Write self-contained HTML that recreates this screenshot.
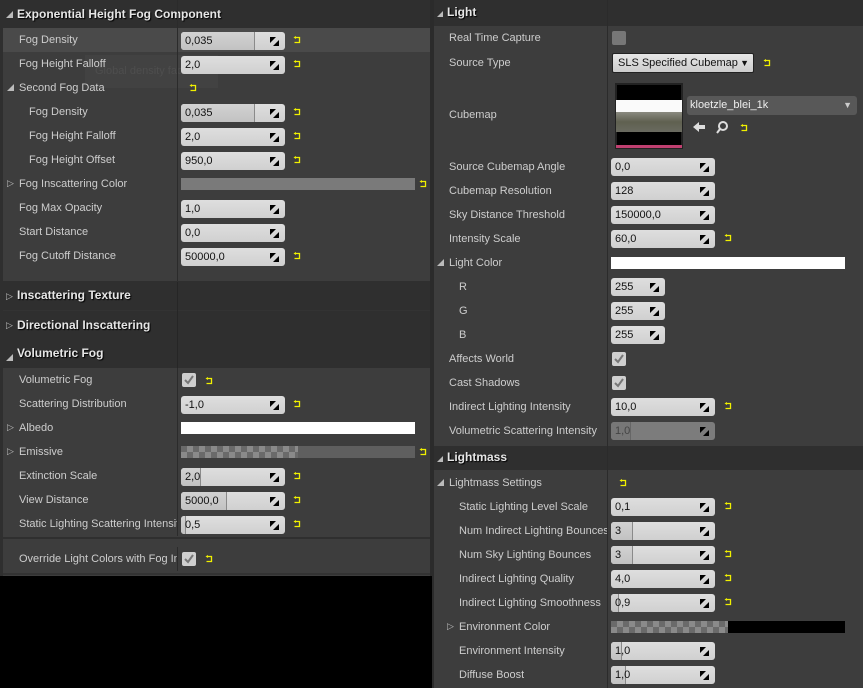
<!DOCTYPE html>
<html><head><meta charset="utf-8"><style>
*{margin:0;padding:0;box-sizing:border-box}
body{width:863px;height:688px;background:#000;position:relative;overflow:hidden;font-family:"Liberation Sans",sans-serif}
.a{position:absolute}
.pan{position:absolute;background:#3d3d3d}
.hd{position:absolute;background:#2f2f2f;color:#e6e6e6;font-weight:bold;font-size:12px;text-shadow:1px 1px 1px #000}
.l{position:absolute;font-size:11px;color:#cdcdcd;height:24px;line-height:25px;white-space:nowrap;overflow:hidden}
.tri{position:absolute;width:0;height:0;border-left:7px solid transparent;border-bottom:7px solid #bbb}
.tr{position:absolute;font-size:9px;color:#bbb}
.in{position:absolute;width:104px;height:18px;border-radius:3px;background:linear-gradient(#dedede,#d0d0d0);font-size:11px;color:#111;line-height:18px;padding-left:4px;overflow:hidden}
.in .f{position:absolute;left:0;top:0;bottom:0;background:linear-gradient(#d2d2d2,#c2c2c2);border-right:1px solid #8a8a8a}
.in span{position:relative}
.in svg{position:absolute;right:6px;top:5px}
.rs{position:absolute;width:9px;height:8px}
.cb{position:absolute;width:14px;height:14px;border-radius:2px;background:#cfcfcf}
.vd{position:absolute;width:1px;background:#2b2b2b}
</style></head><body>
<svg width="0" height="0" style="position:absolute"><defs>
<g id="dr"><polygon points="0,0 6,0 0,6" fill="#000"/><polygon points="9,9 3,9 9,3" fill="#000"/></g>
<g id="rt"><path d="M2 1.5h4.5v5h-5" fill="none" stroke="#f0f000" stroke-width="1.3"/><path d="M0.5 1.5l2.5-1.5v3z" fill="#f0f000"/></g>
<g id="ck"><path d="M3 7l3 3 5-7" fill="none" stroke="#777" stroke-width="2"/></g>
</defs></svg>

<!-- LEFT PANEL -->
<div class="pan" style="left:0;top:0;width:432px;height:576px"></div>
<div class="a" style="left:0;top:0;width:3px;height:576px;background:#2f2f2f"></div>
<div class="a" style="left:430px;top:0;width:3px;height:576px;background:#2b2b2b"></div>
<div class="hd" style="left:3px;top:0;width:427px;height:28px;line-height:28px;padding-left:14px">Exponential Height Fog Component</div>
<div class="tri" style="left:6px;top:11px"></div>
<div class="a" style="left:3px;top:28px;width:427px;height:24px;background:#4a4a4a"></div>
<div class="a" style="left:85px;top:55px;width:133px;height:33px;background:rgba(80,80,80,.3)"></div>
<div class="a" style="left:95px;top:65px;font-size:11px;color:rgba(100,100,100,.35)">Global density factor.</div>

<div class="l" style="left:19px;top:28px">Fog Density</div>
<div class="l" style="left:19px;top:52px">Fog Height Falloff</div>
<div class="tri" style="left:7px;top:84px"></div><div class="l" style="left:19px;top:76px">Second Fog Data</div>
<div class="l" style="left:29px;top:100px">Fog Density</div>
<div class="l" style="left:29px;top:124px">Fog Height Falloff</div>
<div class="l" style="left:29px;top:148px">Fog Height Offset</div>
<div class="tr" style="left:7px;top:178px">▷</div><div class="l" style="left:19px;top:172px">Fog Inscattering Color</div>
<div class="l" style="left:19px;top:196px">Fog Max Opacity</div>
<div class="l" style="left:19px;top:220px">Start Distance</div>
<div class="l" style="left:19px;top:244px">Fog Cutoff Distance</div>

<div class="in" style="left:181px;top:32px"><div class="f" style="width:74px"></div><span>0,035</span><svg width="9" height="9"><use href="#dr"/></svg></div>
<svg class="rs" style="left:293px;top:36px"><use href="#rt"/></svg>
<div class="in" style="left:181px;top:56px"><span>2,0</span><svg width="9" height="9"><use href="#dr"/></svg></div>
<svg class="rs" style="left:293px;top:60px"><use href="#rt"/></svg>
<svg class="rs" style="left:189px;top:84px"><use href="#rt"/></svg>
<div class="in" style="left:181px;top:104px"><div class="f" style="width:74px"></div><span>0,035</span><svg width="9" height="9"><use href="#dr"/></svg></div>
<svg class="rs" style="left:293px;top:108px"><use href="#rt"/></svg>
<div class="in" style="left:181px;top:128px"><span>2,0</span><svg width="9" height="9"><use href="#dr"/></svg></div>
<svg class="rs" style="left:293px;top:132px"><use href="#rt"/></svg>
<div class="in" style="left:181px;top:152px"><span>950,0</span><svg width="9" height="9"><use href="#dr"/></svg></div>
<svg class="rs" style="left:293px;top:156px"><use href="#rt"/></svg>
<div class="a" style="left:181px;top:178px;width:234px;height:12px;background:#7a7a7a"></div>
<svg class="rs" style="left:419px;top:180px"><use href="#rt"/></svg>
<div class="in" style="left:181px;top:200px"><span>1,0</span><svg width="9" height="9"><use href="#dr"/></svg></div>
<div class="in" style="left:181px;top:224px"><span>0,0</span><svg width="9" height="9"><use href="#dr"/></svg></div>
<div class="in" style="left:181px;top:248px"><span>50000,0</span><svg width="9" height="9"><use href="#dr"/></svg></div>
<svg class="rs" style="left:293px;top:252px"><use href="#rt"/></svg>

<div class="vd" style="left:177px;top:0;height:282px"></div>

<div class="hd" style="left:3px;top:281px;width:427px;height:29px;line-height:29px;padding-left:14px">Inscattering Texture</div>
<div class="tr" style="left:6px;top:291px">▷</div>
<div class="hd" style="left:3px;top:310px;width:427px;height:29px;line-height:29px;padding-left:14px;border-top:1px solid #333">Directional Inscattering</div>
<div class="tr" style="left:6px;top:320px">▷</div>
<div class="hd" style="left:3px;top:339px;width:427px;height:29px;line-height:29px;padding-left:14px">Volumetric Fog</div>
<div class="tri" style="left:6px;top:354px"></div>
<div class="vd" style="left:177px;top:282px;height:86px;background:#262626"></div>

<div class="l" style="left:19px;top:368px">Volumetric Fog</div>
<div class="l" style="left:19px;top:392px">Scattering Distribution</div>
<div class="tr" style="left:7px;top:422px">▷</div><div class="l" style="left:19px;top:416px">Albedo</div>
<div class="tr" style="left:7px;top:446px">▷</div><div class="l" style="left:19px;top:440px">Emissive</div>
<div class="l" style="left:19px;top:464px">Extinction Scale</div>
<div class="l" style="left:19px;top:488px">View Distance</div>
<div class="l" style="left:19px;top:512px;width:158px">Static Lighting Scattering Intensity</div>

<div class="cb" style="left:182px;top:373px"><svg width="14" height="14"><use href="#ck"/></svg></div>
<svg class="rs" style="left:205px;top:377px"><use href="#rt"/></svg>
<div class="in" style="left:181px;top:396px"><span>-1,0</span><svg width="9" height="9"><use href="#dr"/></svg></div>
<svg class="rs" style="left:293px;top:400px"><use href="#rt"/></svg>
<div class="a" style="left:181px;top:422px;width:234px;height:12px;background:#fff"></div>
<div class="a" style="left:181px;top:446px;width:234px;height:12px;background:#5f5f5f"></div>
<div class="a" style="left:181px;top:446px;width:117px;height:12px;background:repeating-conic-gradient(#8a8a8a 0 25%,#6a6a6a 0 50%) 0 0/12px 12px"></div>
<svg class="rs" style="left:419px;top:448px"><use href="#rt"/></svg>
<div class="in" style="left:181px;top:468px"><div class="f" style="width:20px"></div><span>2,0</span><svg width="9" height="9"><use href="#dr"/></svg></div>
<svg class="rs" style="left:293px;top:472px"><use href="#rt"/></svg>
<div class="in" style="left:181px;top:492px"><div class="f" style="width:46px"></div><span>5000,0</span><svg width="9" height="9"><use href="#dr"/></svg></div>
<svg class="rs" style="left:293px;top:496px"><use href="#rt"/></svg>
<div class="in" style="left:181px;top:516px"><div class="f" style="width:5px"></div><span>0,5</span><svg width="9" height="9"><use href="#dr"/></svg></div>
<svg class="rs" style="left:293px;top:520px"><use href="#rt"/></svg>
<div class="vd" style="left:177px;top:368px;height:168px"></div>

<div class="a" style="left:3px;top:537px;width:427px;height:2px;background:#2f2f2f"></div>
<div class="l" style="left:19px;top:547px;width:158px">Override Light Colors with Fog Inscattering</div>
<div class="vd" style="left:177px;top:547px;height:24px"></div>
<div class="cb" style="left:182px;top:552px"><svg width="14" height="14"><use href="#ck"/></svg></div>
<svg class="rs" style="left:205px;top:555px"><use href="#rt"/></svg>
<div class="a" style="left:3px;top:573px;width:427px;height:2px;background:#333"></div>

<!-- RIGHT PANEL -->
<div class="pan" style="left:432px;top:0;width:431px;height:688px"></div>
<div class="a" style="left:432px;top:0;width:2px;height:688px;background:#2b2b2b"></div>
<div class="hd" style="left:434px;top:0;width:429px;height:26px;line-height:24px;padding-left:13px">Light</div>
<div class="tri" style="left:437px;top:11px;border-left-width:6px;border-bottom-width:6px"></div>
<div class="vd" style="left:607px;top:0;height:446px"></div>

<div class="l" style="left:449px;top:26px">Real Time Capture</div>
<div class="l" style="left:449px;top:51px">Source Type</div>
<div class="l" style="left:449px;top:103px">Cubemap</div>
<div class="l" style="left:449px;top:155px">Source Cubemap Angle</div>
<div class="l" style="left:449px;top:179px">Cubemap Resolution</div>
<div class="l" style="left:449px;top:203px">Sky Distance Threshold</div>
<div class="l" style="left:449px;top:227px">Intensity Scale</div>
<div class="tri" style="left:437px;top:259px"></div><div class="l" style="left:449px;top:251px">Light Color</div>
<div class="l" style="left:459px;top:275px">R</div>
<div class="l" style="left:459px;top:299px">G</div>
<div class="l" style="left:459px;top:323px">B</div>
<div class="l" style="left:449px;top:347px">Affects World</div>
<div class="l" style="left:449px;top:371px">Cast Shadows</div>
<div class="l" style="left:449px;top:395px">Indirect Lighting Intensity</div>
<div class="l" style="left:449px;top:419px;width:158px">Volumetric Scattering Intensity</div>

<div class="cb" style="left:612px;top:31px;background:#777"></div>
<div class="a" style="left:612px;top:53px;width:142px;height:20px;border-radius:2px;background:linear-gradient(#e6e6e6,#cdcdcd);border:1px solid #222;font-size:11px;line-height:18px;padding-left:5px;color:#111">SLS Specified Cubemap<span style="position:absolute;right:4px;top:0;font-size:9px">▼</span></div>
<svg class="rs" style="left:763px;top:59px"><use href="#rt"/></svg>
<div class="a" style="left:615px;top:83px;width:68px;height:66px;background:#000;border:2px solid #222"></div>
<div class="a" style="left:616px;top:100px;width:66px;height:12px;background:#fafafa"></div>
<div class="a" style="left:616px;top:112px;width:66px;height:20px;background:linear-gradient(#8a8a80,#5f6050 50%,#6a6a60)"></div>
<div class="a" style="left:616px;top:145px;width:66px;height:3px;background:#c04070"></div>
<div class="a" style="left:687px;top:96px;width:170px;height:19px;border-radius:3px;background:#585858;font-size:11px;line-height:18px;padding-left:3px;color:#eee">kloetzle_blei_1k<span style="position:absolute;right:5px;top:0;font-size:9px;color:#ccc">▼</span></div>
<svg class="a" style="left:692px;top:120px" width="14" height="14"><path d="M1 7l6-5v3h6v4h-6v3z" fill="#ddd"/></svg>
<svg class="a" style="left:715px;top:120px" width="14" height="14"><circle cx="8" cy="6" r="4" fill="none" stroke="#ddd" stroke-width="2"/><path d="M5 9l-3 4" stroke="#ddd" stroke-width="2"/></svg>
<svg class="rs" style="left:740px;top:124px"><use href="#rt"/></svg>

<div class="in" style="left:611px;top:158px"><span>0,0</span><svg width="9" height="9"><use href="#dr"/></svg></div>
<div class="in" style="left:611px;top:182px"><span>128</span><svg width="9" height="9"><use href="#dr"/></svg></div>
<div class="in" style="left:611px;top:206px"><span>150000,0</span><svg width="9" height="9"><use href="#dr"/></svg></div>
<div class="in" style="left:611px;top:230px"><span>60,0</span><svg width="9" height="9"><use href="#dr"/></svg></div>
<svg class="rs" style="left:724px;top:234px"><use href="#rt"/></svg>
<div class="a" style="left:611px;top:257px;width:234px;height:12px;background:#fff"></div>
<div class="in" style="left:611px;top:278px;width:54px"><span>255</span><svg width="9" height="9"><use href="#dr"/></svg></div>
<div class="in" style="left:611px;top:302px;width:54px"><span>255</span><svg width="9" height="9"><use href="#dr"/></svg></div>
<div class="in" style="left:611px;top:326px;width:54px"><span>255</span><svg width="9" height="9"><use href="#dr"/></svg></div>
<div class="cb" style="left:612px;top:352px"><svg width="14" height="14"><use href="#ck"/></svg></div>
<div class="cb" style="left:612px;top:376px"><svg width="14" height="14"><use href="#ck"/></svg></div>
<div class="in" style="left:611px;top:398px"><span>10,0</span><svg width="9" height="9"><use href="#dr"/></svg></div>
<svg class="rs" style="left:724px;top:402px"><use href="#rt"/></svg>
<div class="in" style="left:611px;top:422px;background:#7c7c7c;color:#444"><div class="f" style="width:20px;background:#777;border-right-color:#666"></div><span>1,0</span><svg width="9" height="9"><use href="#dr"/></svg></div>

<div class="hd" style="left:434px;top:446px;width:429px;height:24px;line-height:22px;padding-left:13px">Lightmass</div>
<div class="tri" style="left:437px;top:456px;border-left-width:6px;border-bottom-width:6px"></div>
<div class="vd" style="left:607px;top:446px;height:242px"></div>
<div class="tri" style="left:437px;top:479px"></div><div class="l" style="left:449px;top:471px">Lightmass Settings</div>
<svg class="rs" style="left:619px;top:479px"><use href="#rt"/></svg>
<div class="l" style="left:459px;top:495px">Static Lighting Level Scale</div>
<div class="l" style="left:459px;top:519px;width:148px">Num Indirect Lighting Bounces</div>
<div class="l" style="left:459px;top:543px">Num Sky Lighting Bounces</div>
<div class="l" style="left:459px;top:567px">Indirect Lighting Quality</div>
<div class="l" style="left:459px;top:591px;width:148px">Indirect Lighting Smoothness</div>
<div class="tr" style="left:447px;top:621px">▷</div><div class="l" style="left:459px;top:615px">Environment Color</div>
<div class="l" style="left:459px;top:639px">Environment Intensity</div>
<div class="l" style="left:459px;top:663px">Diffuse Boost</div>

<div class="in" style="left:611px;top:498px"><span>0,1</span><svg width="9" height="9"><use href="#dr"/></svg></div>
<svg class="rs" style="left:724px;top:502px"><use href="#rt"/></svg>
<div class="in" style="left:611px;top:522px"><div class="f" style="width:22px"></div><span>3</span><svg width="9" height="9"><use href="#dr"/></svg></div>
<div class="in" style="left:611px;top:546px"><div class="f" style="width:22px"></div><span>3</span><svg width="9" height="9"><use href="#dr"/></svg></div>
<svg class="rs" style="left:724px;top:550px"><use href="#rt"/></svg>
<div class="in" style="left:611px;top:570px"><span>4,0</span><svg width="9" height="9"><use href="#dr"/></svg></div>
<svg class="rs" style="left:724px;top:574px"><use href="#rt"/></svg>
<div class="in" style="left:611px;top:594px"><div class="f" style="width:8px"></div><span>0,9</span><svg width="9" height="9"><use href="#dr"/></svg></div>
<svg class="rs" style="left:724px;top:598px"><use href="#rt"/></svg>
<div class="a" style="left:611px;top:621px;width:234px;height:12px;background:#000"></div>
<div class="a" style="left:611px;top:621px;width:117px;height:12px;background:repeating-conic-gradient(#8a8a8a 0 25%,#6a6a6a 0 50%) 0 0/12px 12px"></div>
<div class="in" style="left:611px;top:642px"><div class="f" style="width:11px"></div><span>1,0</span><svg width="9" height="9"><use href="#dr"/></svg></div>
<div class="in" style="left:611px;top:666px"><div class="f" style="width:15px"></div><span>1,0</span><svg width="9" height="9"><use href="#dr"/></svg></div>
</body></html>
